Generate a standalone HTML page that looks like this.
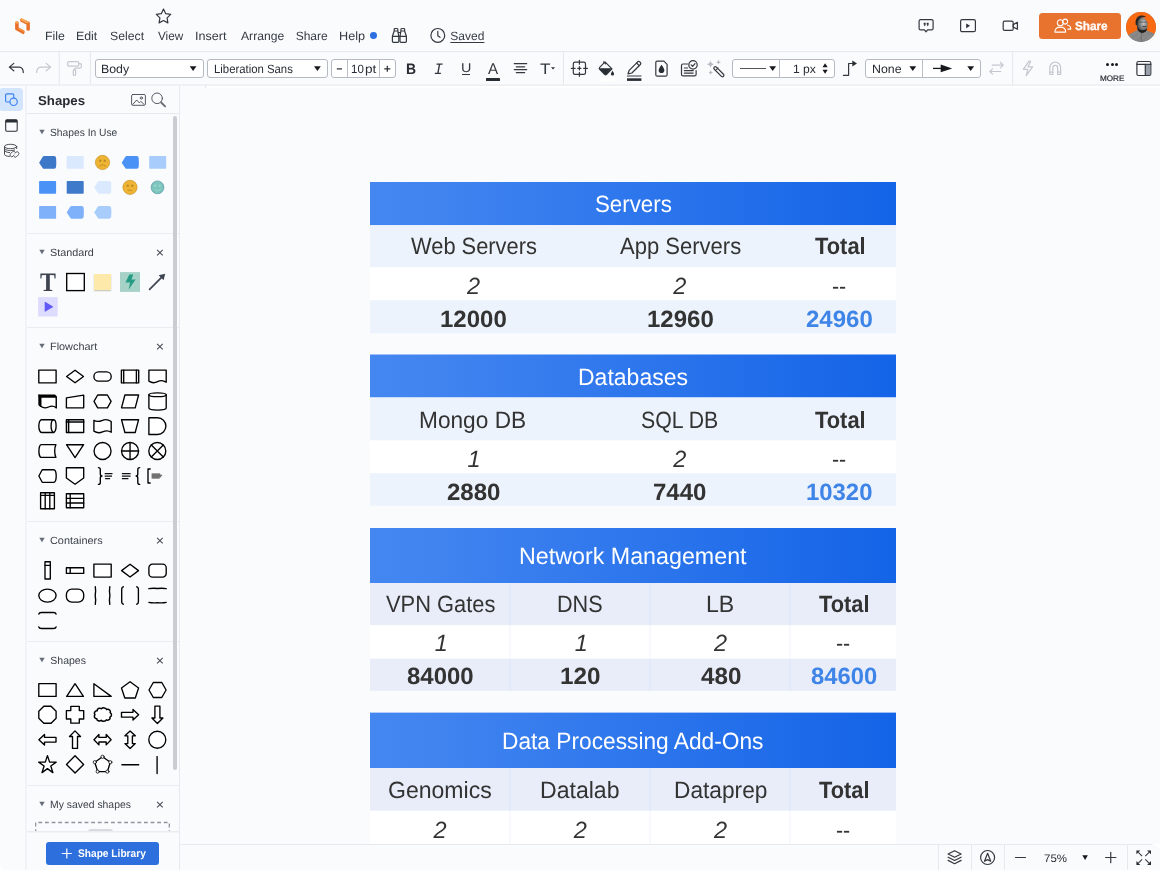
<!DOCTYPE html>
<html lang="en">
<head>
<meta charset="utf-8">
<title>Lucidchart</title>
<style>
*{box-sizing:border-box;margin:0;padding:0}
html,body{width:1160px;height:870px;overflow:hidden;background:#fafbfd;font-family:"Liberation Sans",sans-serif;color:#282c33;text-rendering:geometricPrecision}
.abs,.abs-all>*{position:absolute}
#app{position:relative;width:1160px;height:870px;overflow:hidden;background:#fafbfd;will-change:transform}
.hl{position:absolute;height:1px;background:#e6e8ec}
.vl{position:absolute;width:1px;background:#e6e8ec}
.t{position:absolute;white-space:nowrap;line-height:1}
.menu{font-size:12px;color:#3a414a;top:30px}
svg{position:absolute;overflow:visible}
.dd{position:absolute;background:#fff;border:1px solid #b5b9c2;border-radius:3px}
.sec{font-size:10.2px;color:#3a414a}
.ic{fill:none;stroke:#000;stroke-width:1.35;stroke-linejoin:round;stroke-linecap:round}
.tb{fill:none;stroke:#33383f;stroke-width:1.2;stroke-linejoin:round;stroke-linecap:round}
.tbd{fill:none;stroke:#c3c7cf;stroke-width:1.2;stroke-linejoin:round;stroke-linecap:round}
.th{position:absolute;left:370px;width:526px;background:linear-gradient(90deg,#4487f1 0%,#3a7fee 45%,#1465e8 100%);color:#fff;text-align:center;font-size:22px;white-space:nowrap}
.row{position:absolute;left:370px;width:526px}
.c{position:absolute;text-align:center;white-space:nowrap;color:#333;font-size:22px;line-height:1;transform:translateX(-50%)}
.b{font-weight:bold}
.i{font-style:italic}
.blue{color:#3f85e8}
</style>
</head>
<body>
<div id="app">
<!-- canvas -->
<svg style="left:0;top:0" width="1160" height="870" viewBox="0 0 1160 870"><defs><linearGradient id="hg" x1="0" y1="0" x2="1" y2="0"><stop offset="0" stop-color="#4487f1"/><stop offset="0.12" stop-color="#4184f0"/><stop offset="0.94" stop-color="#1766e8"/><stop offset="1" stop-color="#1464e8"/></linearGradient></defs>
<rect x="370" y="182" width="526" height="43.2" fill="url(#hg)"/>
<rect x="370" y="225.2" width="526" height="42.1" fill="#edf3fc"/>
<rect x="370" y="267.3" width="526" height="33" fill="#fff"/>
<rect x="370" y="300.3" width="526" height="33" fill="#edf3fc"/>
<rect x="370" y="354.5" width="526" height="43" fill="url(#hg)"/>
<rect x="370" y="397.5" width="526" height="43" fill="#edf3fc"/>
<rect x="370" y="440.5" width="526" height="32.8" fill="#fff"/>
<rect x="370" y="473.3" width="526" height="32.5" fill="#edf3fc"/>
<rect x="370" y="528" width="526" height="55" fill="url(#hg)"/>
<rect x="370" y="583" width="526" height="42.2" fill="#e8edf9"/>
<rect x="370" y="625.2" width="526" height="33.5" fill="#fff"/>
<rect x="370" y="658.7" width="526" height="32.1" fill="#e8edf9"/>
<rect x="509.5" y="583" width="1" height="42.2" fill="#dbe5f8"/>
<rect x="509.5" y="625.2" width="1" height="33.5" fill="#f1f4fb"/>
<rect x="509.5" y="658.7" width="1" height="32.1" fill="#dbe5f8"/>
<rect x="649.5" y="583" width="1" height="42.2" fill="#dbe5f8"/>
<rect x="649.5" y="625.2" width="1" height="33.5" fill="#f1f4fb"/>
<rect x="649.5" y="658.7" width="1" height="32.1" fill="#dbe5f8"/>
<rect x="789.5" y="583" width="1" height="42.2" fill="#dbe5f8"/>
<rect x="789.5" y="625.2" width="1" height="33.5" fill="#f1f4fb"/>
<rect x="789.5" y="658.7" width="1" height="32.1" fill="#dbe5f8"/>
<rect x="370" y="712.6" width="526" height="55.4" fill="url(#hg)"/>
<rect x="370" y="768" width="526" height="42.8" fill="#e8edf9"/>
<rect x="370" y="810.8" width="526" height="35.2" fill="#fff"/>
<rect x="509.5" y="768" width="1" height="42.8" fill="#dbe5f8"/>
<rect x="509.5" y="810.8" width="1" height="35.2" fill="#f1f4fb"/>
<rect x="649.5" y="768" width="1" height="42.8" fill="#dbe5f8"/>
<rect x="649.5" y="810.8" width="1" height="35.2" fill="#f1f4fb"/>
<rect x="789.5" y="768" width="1" height="42.8" fill="#dbe5f8"/>
<rect x="789.5" y="810.8" width="1" height="35.2" fill="#f1f4fb"/>
</svg>
<div class="t " style="left:594.80px;top:193px;font-size:23.5px;color:#fff;transform:scaleX(0.9484);transform-origin:0 0">Servers</div>
<div class="t " style="left:410.79px;top:235px;font-size:23.5px;color:#333;transform:scaleX(0.9299);transform-origin:0 0">Web Servers</div>
<div class="t " style="left:619.60px;top:235px;font-size:23.5px;color:#333;transform:scaleX(0.9374);transform-origin:0 0">App Servers</div>
<div class="t " style="left:815.18px;top:235px;font-size:23.5px;font-weight:bold;color:#333;transform:scaleX(0.9310);transform-origin:0 0">Total</div>
<div class="t " style="left:466.91px;top:275px;font-size:23.5px;font-style:italic;color:#333">2</div>
<div class="t " style="left:673.31px;top:275px;font-size:23.5px;font-style:italic;color:#333">2</div>
<div class="t " style="left:832.24px;top:275px;font-size:23.5px;color:#333;transform:scaleX(0.9098);transform-origin:0 0">--</div>
<div class="t " style="left:439.76px;top:308px;font-size:23.5px;font-weight:bold;color:#333;transform:scaleX(1.0210);transform-origin:0 0">12000</div>
<div class="t " style="left:646.66px;top:308px;font-size:23.5px;font-weight:bold;color:#333;transform:scaleX(1.0210);transform-origin:0 0">12960</div>
<div class="t " style="left:806.16px;top:308px;font-size:23.5px;font-weight:bold;color:#3f85e8;transform:scaleX(1.0210);transform-origin:0 0">24960</div>
<div class="t " style="left:577.76px;top:366px;font-size:23.5px;color:#fff;transform:scaleX(0.9788);transform-origin:0 0">Databases</div>
<div class="t " style="left:419.39px;top:409px;font-size:23.5px;color:#333;transform:scaleX(0.9650);transform-origin:0 0">Mongo DB</div>
<div class="t " style="left:640.94px;top:409px;font-size:23.5px;color:#333;transform:scaleX(0.9052);transform-origin:0 0">SQL DB</div>
<div class="t " style="left:815.18px;top:409px;font-size:23.5px;font-weight:bold;color:#333;transform:scaleX(0.9310);transform-origin:0 0">Total</div>
<div class="t " style="left:467.58px;top:448px;font-size:23.5px;font-style:italic;color:#333">1</div>
<div class="t " style="left:673.31px;top:448px;font-size:23.5px;font-style:italic;color:#333">2</div>
<div class="t " style="left:832.24px;top:448px;font-size:23.5px;color:#333;transform:scaleX(0.9098);transform-origin:0 0">--</div>
<div class="t " style="left:446.66px;top:481px;font-size:23.5px;font-weight:bold;color:#333;transform:scaleX(1.0233);transform-origin:0 0">2880</div>
<div class="t " style="left:653.04px;top:481px;font-size:23.5px;font-weight:bold;color:#333;transform:scaleX(1.0217);transform-origin:0 0">7440</div>
<div class="t " style="left:806.07px;top:481px;font-size:23.5px;font-weight:bold;color:#3f85e8;transform:scaleX(1.0162);transform-origin:0 0">10320</div>
<div class="t " style="left:519.04px;top:545px;font-size:23.5px;color:#fff;transform:scaleX(0.9898);transform-origin:0 0">Network Management</div>
<div class="t " style="left:386.09px;top:593px;font-size:23.5px;color:#333;transform:scaleX(0.9300);transform-origin:0 0">VPN Gates</div>
<div class="t " style="left:557.47px;top:593px;font-size:23.5px;color:#333;transform:scaleX(0.9197);transform-origin:0 0">DNS</div>
<div class="t " style="left:706.05px;top:593px;font-size:23.5px;color:#333;transform:scaleX(0.9838);transform-origin:0 0">LB</div>
<div class="t " style="left:819.18px;top:593px;font-size:23.5px;font-weight:bold;color:#333;transform:scaleX(0.9291);transform-origin:0 0">Total</div>
<div class="t " style="left:434.78px;top:632px;font-size:23.5px;font-style:italic;color:#333">1</div>
<div class="t " style="left:574.78px;top:632px;font-size:23.5px;font-style:italic;color:#333">1</div>
<div class="t " style="left:714.01px;top:632px;font-size:23.5px;font-style:italic;color:#333">2</div>
<div class="t " style="left:836.04px;top:632px;font-size:23.5px;color:#333;transform:scaleX(0.9098);transform-origin:0 0">--</div>
<div class="t " style="left:406.78px;top:665px;font-size:23.5px;font-weight:bold;color:#333;transform:scaleX(1.0206);transform-origin:0 0">84000</div>
<div class="t " style="left:559.84px;top:665px;font-size:23.5px;font-weight:bold;color:#333;transform:scaleX(1.0332);transform-origin:0 0">120</div>
<div class="t " style="left:700.64px;top:665px;font-size:23.5px;font-weight:bold;color:#333;transform:scaleX(1.0308);transform-origin:0 0">480</div>
<div class="t " style="left:810.79px;top:665px;font-size:23.5px;font-weight:bold;color:#3f85e8;transform:scaleX(1.0128);transform-origin:0 0">84600</div>
<div class="t " style="left:502.28px;top:730px;font-size:23.5px;color:#fff;transform:scaleX(0.9669);transform-origin:0 0">Data Processing Add-Ons</div>
<div class="t " style="left:388.25px;top:779px;font-size:23.5px;color:#333;transform:scaleX(0.9802);transform-origin:0 0">Genomics</div>
<div class="t " style="left:540.05px;top:779px;font-size:23.5px;color:#333;transform:scaleX(0.9816);transform-origin:0 0">Datalab</div>
<div class="t " style="left:673.58px;top:779px;font-size:23.5px;color:#333;transform:scaleX(0.9661);transform-origin:0 0">Dataprep</div>
<div class="t " style="left:819.18px;top:779px;font-size:23.5px;font-weight:bold;color:#333;transform:scaleX(0.9291);transform-origin:0 0">Total</div>
<div class="t " style="left:433.41px;top:819px;font-size:23.5px;font-style:italic;color:#333">2</div>
<div class="t " style="left:573.71px;top:819px;font-size:23.5px;font-style:italic;color:#333">2</div>
<div class="t " style="left:714.01px;top:819px;font-size:23.5px;font-style:italic;color:#333">2</div>
<div class="t " style="left:836.04px;top:819px;font-size:23.5px;color:#333;transform:scaleX(0.9098);transform-origin:0 0">--</div>
<!-- bottom bar -->
<div class="abs" style="left:180px;top:844px;width:980px;height:26px;background:#fafbfd;"></div>
<div class="abs" style="left:180px;top:844px;width:973px;height:1px;background:#e6e9ed;"></div>
<div class="abs" style="left:938px;top:845px;width:1px;height:25px;background:#e7e9ed;"></div>
<div class="abs" style="left:971px;top:845px;width:1px;height:25px;background:#e7e9ed;"></div>
<div class="abs" style="left:1004px;top:845px;width:1px;height:25px;background:#e7e9ed;"></div>
<div class="abs" style="left:1127px;top:845px;width:1px;height:25px;background:#e7e9ed;"></div>
<div class="t " style="left:1044.33px;top:854px;font-size:11px;color:#282c33;transform:scaleX(1.0444);transform-origin:0 0">75%</div>
<!-- top bar -->
<div class="abs" style="left:0px;top:0px;width:1160px;height:86px;background:#fafbfd;"></div>
<svg style="left:0px;top:50px;" width="1160" height="4" viewBox="0 0 1160 4"><rect x="0" y="1.100" width="1160" height="1.050" fill="#e5e7eb"/></svg>
<svg style="left:0px;top:83px;" width="1160" height="4" viewBox="0 0 1160 4"><rect x="0" y="1.500" width="1160" height="1.050" fill="#e5e7eb"/></svg>
<div class="abs" style="left:206px;top:86px;width:954px;height:2px;background:#fff;"></div>
<div class="abs" style="left:205px;top:85px;width:1px;height:3px;background:#e4e6ea;"></div>
<div class="t " style="left:44.51px;top:30px;font-size:12px;color:#343a43;transform:scaleX(1.0269);transform-origin:0 0">File</div>
<div class="t " style="left:76.21px;top:30px;font-size:12px;color:#343a43;transform:scaleX(1.0296);transform-origin:0 0">Edit</div>
<div class="t " style="left:110.15px;top:30px;font-size:12px;color:#343a43;transform:scaleX(1.0214);transform-origin:0 0">Select</div>
<div class="t " style="left:157.74px;top:30px;font-size:12px;color:#343a43;transform:scaleX(0.9790);transform-origin:0 0">View</div>
<div class="t " style="left:195.37px;top:30px;font-size:12px;color:#343a43;transform:scaleX(1.0464);transform-origin:0 0">Insert</div>
<div class="t " style="left:240.50px;top:30px;font-size:12px;color:#343a43;transform:scaleX(1.0114);transform-origin:0 0">Arrange</div>
<div class="t " style="left:295.66px;top:30px;font-size:12px;color:#343a43">Share</div>
<div class="t " style="left:339.49px;top:30px;font-size:12px;color:#343a43;transform:scaleX(1.0551);transform-origin:0 0">Help</div>
<div class="abs" style="left:370px;top:32.3px;width:6.8px;height:6.8px;background:#2d6fe0;border-radius:50%"></div>
<div class="t " style="left:450.36px;top:30px;font-size:12px;color:#343a43;text-decoration:underline;text-underline-offset:1.5px">Saved</div>
<div class="abs" style="left:1039px;top:13px;width:82.2px;height:25.8px;background:#e8732f;border-radius:3.5px"></div>
<div class="t " style="left:1075.15px;top:20px;font-size:12px;font-weight:bold;color:#fff;transform:scaleX(0.9791);transform-origin:0 0;-webkit-text-stroke:0.25px #fff">Share</div>
<svg style="left:1126px;top:12px;" width="30" height="30" viewBox="0 0 30 30"><defs><clipPath id="avc"><circle cx="15" cy="15" r="15"/></clipPath>
<radialGradient id="avf" cx="0.62" cy="0.38" r="0.6"><stop offset="0" stop-color="#c9c9c9"/><stop offset="0.45" stop-color="#8d8d8d"/><stop offset="1" stop-color="#4a4a4a"/></radialGradient></defs>
<g clip-path="url(#avc)"><rect width="30" height="30" fill="#858585"/><rect width="30" height="24.500" fill="#f96a12"/>
<path d="M1 23.500L10.800 18.300L20.500 18.300L29 22L29 31H1Z" fill="#858585"/>
<path d="M4 24L11 20M8 27L15 23M14 29L20 24M20 28L26 23M12 21L18 26M17 20L24 26" stroke="#9c9c9c" stroke-width="0.7" fill="none" opacity=".7"/>
<path d="M15.300 19V30" stroke="#6a6a6a" stroke-width="0.8"/>
<path d="M11 13Q10.500 19.500 16 20.600Q20.500 20 21.500 15L21.600 11Q20 5.500 15.500 5.200Q10.500 6 11 13Z" fill="url(#avf)"/>
<path d="M9.600 12.500Q8.600 5.500 14.500 3.600Q18.600 2.800 20.200 5.200Q14.500 4.500 12.400 8.500Q11.200 11 11.300 14Z" fill="#262626"/>
<path d="M11.200 14.500Q11.200 20 16.200 21Q20.200 20.500 21.300 16.500Q19 18.500 16.200 18.200Q12.800 18 11.200 14.500Z" fill="#1d1d1d"/>
<path d="M13.500 10.200H21.200" stroke="#3a3a3a" stroke-width="0.6" fill="none"/>
<path d="M16.600 14.400Q18.500 15 20.200 14.200" stroke="#2a2a2a" stroke-width="0.8" fill="none"/>
</g></svg>
<!-- toolbar -->
<svg style="left:57px;top:52px;" width="4" height="33" viewBox="0 0 4 33"><rect x="1.7" y="0.300" width="1.050" height="32.200" fill="#e5e7eb"/></svg>
<svg style="left:88px;top:52px;" width="4" height="33" viewBox="0 0 4 33"><rect x="1.9" y="0.300" width="1.050" height="32.200" fill="#e5e7eb"/></svg>
<svg style="left:561px;top:52px;" width="4" height="33" viewBox="0 0 4 33"><rect x="1.9" y="0.300" width="1.050" height="32.200" fill="#e5e7eb"/></svg>
<svg style="left:1011px;top:52px;" width="4" height="33" viewBox="0 0 4 33"><rect x="1.1" y="0.300" width="1.050" height="32.200" fill="#e5e7eb"/></svg>
<div class="dd" style="left:94.5px;top:59px;width:109px;height:18.6px"></div>
<div class="t " style="left:100.71px;top:63px;font-size:12px;color:#282c33;transform:scaleX(1.0265);transform-origin:0 0">Body</div>
<div class="dd" style="left:207.2px;top:59px;width:120.5px;height:18.6px"></div>
<div class="t " style="left:213.79px;top:63px;font-size:12px;color:#282c33;transform:scaleX(0.9449);transform-origin:0 0">Liberation Sans</div>
<div class="dd" style="left:331px;top:59px;width:65px;height:18.6px"></div>
<div class="abs" style="left:347px;top:60px;width:1px;height:16.6px;background:#b9bec8;"></div>
<div class="abs" style="left:379px;top:60px;width:1px;height:16.6px;background:#b9bec8;"></div>
<div class="t " style="left:350.84px;top:63px;font-size:12px;color:#282c33;transform:scaleX(0.9583);transform-origin:0 0">10</div>
<div class="t " style="left:364.72px;top:63px;font-size:12px;color:#282c33;transform:scaleX(1.1294);transform-origin:0 0">pt</div>
<div class="dd" style="left:731.5px;top:59px;width:103px;height:18.6px"></div>
<div class="abs" style="left:779px;top:60px;width:1px;height:16.6px;background:#b9bec8;"></div>
<div class="t " style="left:792.69px;top:63px;font-size:12px;color:#282c33;transform:scaleX(1.0111);transform-origin:0 0">1 px</div>
<div class="dd" style="left:865.2px;top:59px;width:115.5px;height:18.6px"></div>
<div class="abs" style="left:922px;top:60px;width:1px;height:16.6px;background:#b9bec8;"></div>
<div class="t " style="left:872.01px;top:63px;font-size:12px;color:#282c33;transform:scaleX(1.0302);transform-origin:0 0">None</div>
<div class="t " style="left:1099.85px;top:75px;font-size:8px;color:#282c33;transform:scaleX(1.0156);transform-origin:0 0;-webkit-text-stroke:0.2px #282c33">MORE</div>
<!-- left panel -->
<div class="abs" style="left:0px;top:86px;width:180px;height:784px;background:#fafbfd;"></div>
<svg style="left:24px;top:86px;" width="4" height="784" viewBox="0 0 4 784"><rect x="1.400" y="0" width="1.050" height="784" fill="#eaecef"/></svg>
<div class="abs" style="left:179px;top:86px;width:1px;height:784px;background:#e7e9ed;"></div>
<div class="abs" style="left:-1px;top:88px;width:24px;height:23px;background:#d3e4fd;border-radius:4px"></div>
<div class="t " style="left:37.50px;top:94px;font-size:13px;font-weight:bold;color:#282c33;transform:scaleX(1.0175);transform-origin:0 0">Shapes</div>
<div class="abs" style="left:27px;top:113px;width:152px;height:1px;background:#e7e9ed;"></div>
<svg style="left:39px;top:129px;" width="5.4" height="4.6" viewBox="0 0 5.4 4.6"><g transform="translate(0.3 0.7)"><path d="M0 0H5.4L2.7 4.6Z" fill="#666d79"/></g></svg>
<div class="t " style="left:50.34px;top:128px;font-size:10.5px;color:#3a414a;transform:scaleX(0.9774);transform-origin:0 0">Shapes In Use</div>
<svg style="left:39px;top:249px;" width="5.4" height="4.6" viewBox="0 0 5.4 4.6"><g transform="translate(0.3 0.7)"><path d="M0 0H5.4L2.7 4.6Z" fill="#666d79"/></g></svg>
<div class="t " style="left:50.31px;top:248px;font-size:10.5px;color:#3a414a;transform:scaleX(1.0295);transform-origin:0 0">Standard</div>
<svg style="left:157px;top:249px;" width="5.6" height="5.6" viewBox="0 0 5.6 5.6"><g transform="translate(0.1 0.9)"><path d="M0 0L5.6 5.6M5.6 0L0 5.6" stroke="#454b54" stroke-width="1.050" fill="none"/></g></svg>
<svg style="left:39px;top:343px;" width="5.4" height="4.6" viewBox="0 0 5.4 4.6"><g transform="translate(0.3 0.7)"><path d="M0 0H5.4L2.7 4.6Z" fill="#666d79"/></g></svg>
<div class="t " style="left:49.93px;top:342px;font-size:10.5px;color:#3a414a;transform:scaleX(1.0365);transform-origin:0 0">Flowchart</div>
<svg style="left:157px;top:343px;" width="5.6" height="5.6" viewBox="0 0 5.6 5.6"><g transform="translate(0.1 0.9)"><path d="M0 0L5.6 5.6M5.6 0L0 5.6" stroke="#454b54" stroke-width="1.050" fill="none"/></g></svg>
<svg style="left:39px;top:537px;" width="5.4" height="4.6" viewBox="0 0 5.4 4.6"><g transform="translate(0.3 0.7)"><path d="M0 0H5.4L2.7 4.6Z" fill="#666d79"/></g></svg>
<div class="t " style="left:50.26px;top:536px;font-size:10.5px;color:#3a414a;transform:scaleX(1.0366);transform-origin:0 0">Containers</div>
<svg style="left:157px;top:537px;" width="5.6" height="5.6" viewBox="0 0 5.6 5.6"><g transform="translate(0.1 0.9)"><path d="M0 0L5.6 5.6M5.6 0L0 5.6" stroke="#454b54" stroke-width="1.050" fill="none"/></g></svg>
<svg style="left:39px;top:657px;" width="5.4" height="4.6" viewBox="0 0 5.4 4.6"><g transform="translate(0.3 0.7)"><path d="M0 0H5.4L2.7 4.6Z" fill="#666d79"/></g></svg>
<div class="t " style="left:50.33px;top:656px;font-size:10.5px;color:#3a414a">Shapes</div>
<svg style="left:157px;top:657px;" width="5.6" height="5.6" viewBox="0 0 5.6 5.6"><g transform="translate(0.1 0.9)"><path d="M0 0L5.6 5.6M5.6 0L0 5.6" stroke="#454b54" stroke-width="1.050" fill="none"/></g></svg>
<svg style="left:39px;top:801px;" width="5.4" height="4.6" viewBox="0 0 5.4 4.6"><g transform="translate(0.3 0.7)"><path d="M0 0H5.4L2.7 4.6Z" fill="#666d79"/></g></svg>
<div class="t " style="left:49.97px;top:800px;font-size:10.5px;color:#3a414a;transform:scaleX(0.9903);transform-origin:0 0">My saved shapes</div>
<svg style="left:157px;top:801px;" width="5.6" height="5.6" viewBox="0 0 5.6 5.6"><g transform="translate(0.1 0.9)"><path d="M0 0L5.6 5.6M5.6 0L0 5.6" stroke="#454b54" stroke-width="1.050" fill="none"/></g></svg>
<div class="abs" style="left:27px;top:233px;width:152px;height:1px;background:#eaecef;"></div>
<div class="abs" style="left:27px;top:327px;width:152px;height:1px;background:#eaecef;"></div>
<div class="abs" style="left:27px;top:521px;width:152px;height:1px;background:#eaecef;"></div>
<div class="abs" style="left:27px;top:641px;width:152px;height:1px;background:#eaecef;"></div>
<div class="abs" style="left:27px;top:785px;width:152px;height:1px;background:#eaecef;"></div>
<div class="abs" style="left:173px;top:116px;width:4.2px;height:654px;background:#c9ccd3;border-radius:2.2px"></div>
<svg style="left:35px;top:821px;" width="136" height="12" viewBox="0 0 136 12"><path d="M0.700 12V1.500H134.300V12" fill="none" stroke="#8f949d" stroke-width="1.300" stroke-dasharray="3.800 2.800"/></svg>
<div class="abs" style="left:88px;top:828.8px;width:25px;height:4px;background:#d7dae0;border-radius:3px 3px 0 0"></div>
<div class="abs" style="left:27px;top:832px;width:152px;height:38px;background:#fafbfd;"></div>
<div class="abs" style="left:27px;top:831px;width:152px;height:1px;background:#eaecef;"></div>
<div class="abs" style="left:27px;top:832px;width:152px;height:1px;background:#f3f4f6;"></div>
<div class="abs" style="left:46px;top:842px;width:113px;height:23px;background:#2c6fdd;border-radius:3px"></div>
<div class="t " style="left:78.49px;top:849px;font-size:11px;font-weight:bold;color:#fff;transform:scaleX(0.9248);transform-origin:0 0">Shape Library</div>
<svg style="left:61px;top:848px;" width="10" height="10" viewBox="0 0 10 10"><g transform="translate(0.8 0.5)"><path d="M5 0V10M0 5H10" stroke="#fff" stroke-width="1.2" fill="none"/></g></svg>
<!-- rail icons -->
<svg style="left:0px;top:86px;" width="26" height="80" viewBox="0 0 26 80">
<rect x="5.6" y="7.8" width="8.2" height="8.2" rx="1.2" fill="none" stroke="#3b82f0" stroke-width="1.15"/>
<circle cx="13.6" cy="15.8" r="3.7" fill="#d3e4fd" stroke="#3b82f0" stroke-width="1.15"/>
<rect x="5.7" y="33.7" width="11.5" height="11.6" rx="1.2" fill="none" stroke="#282c33" stroke-width="1.050"/>
<path d="M5.7 34.9a1.2 1.2 0 0 1 1.2-1.2h9.1a1.2 1.2 0 0 1 1.2 1.2v1.6H5.7z" fill="#282c33"/>
<g fill="none" stroke="#40454d" stroke-width="0.95" stroke-linecap="round">
<ellipse cx="10.600" cy="60.500" rx="6.100" ry="2.200"/>
<path d="M4.500 60.500V68.300C4.500 69.400 6.500 70.300 9.300 70.500M16.700 60.500V62.600M4.500 64.400C4.500 65.500 6.600 66.400 9.600 66.600M4.500 62.400C4.500 63.600 7.200 64.600 10.600 64.600C12.200 64.600 13.600 64.400 14.700 64"/>
<path d="M14 69.200L13 70.200A1.750 1.750 0 0 1 10.500 67.700L12.400 65.800A1.750 1.750 0 0 1 14.900 65.800M14.900 67.300L15.900 66.300A1.750 1.750 0 0 1 18.400 68.800L16.500 70.700A1.750 1.750 0 0 1 14 70.700" stroke-width="0.9"/>
</g>
</svg>
<svg style="left:130px;top:92px;" width="40" height="18" viewBox="0 0 40 18">
<g fill="none" stroke="#4a4f58" stroke-width="0.95" stroke-linejoin="round" stroke-linecap="round">
<rect x="1.6" y="2.5" width="13.8" height="10.8" rx="1.3"/>
<circle cx="11.3" cy="6" r="1.1"/>
<path d="M3 12.2l3.700-4.200 2.600 2.900 1.500-1.500 3 2.800"/>
<circle cx="27.100" cy="6.300" r="5.300"/>
<path d="M31.200 10.500l3.900 3.900" stroke-width="1.900" stroke="#6a6f78"/>
</g>
</svg>
<!-- shapes in use -->
<svg style="left:38px;top:150px" width="20" height="25" viewBox="0 0 20 25"><g class="" transform="translate(0.2 12.45)"><path d="M0.9 0.300L4.400 -5.500Q5 -6.400 6 -6.400H15.800Q17.900 -6.400 17.900 -4.300Q18.300 0 17.900 4.300Q17.900 6.400 15.800 6.400H6Q5 6.400 4.400 5.500Z" fill="#3d78c8" stroke="none"/></g></svg>
<svg style="left:65px;top:150px" width="20" height="25" viewBox="0 0 20 25"><g class="" transform="translate(0.8 12.45)"><rect x="0.9" y="-6.400" width="17" height="12.800" rx="0.8" fill="#dbe9fe" stroke="none"/></g></svg>
<svg style="left:93px;top:150px" width="20" height="25" viewBox="0 0 20 25"><g class="" transform="translate(0.3 12.45)"><circle cx="9.200" cy="0" r="7.1" fill="#eeb432" stroke="#c8922a" stroke-width="0.7"/><circle cx="6.900" cy="-1.700" r="1.200" fill="#b98a2a" stroke="none"/><circle cx="11.500" cy="-1.700" r="1.200" fill="#b98a2a" stroke="none"/><path d="M5.900 3.900Q9.200 0.600 12.500 3.900" fill="none" stroke="#b98a2a" stroke-width="0.9" stroke-linecap="round"/></g></svg>
<svg style="left:120px;top:150px" width="20" height="25" viewBox="0 0 20 25"><g class="" transform="translate(0.8 12.45)"><path d="M0.9 0.300L4.400 -5.500Q5 -6.400 6 -6.400H15.800Q17.900 -6.400 17.900 -4.300Q18.300 0 17.900 4.300Q17.900 6.400 15.800 6.400H6Q5 6.400 4.400 5.500Z" fill="#4b92f7" stroke="none"/></g></svg>
<svg style="left:148px;top:150px" width="20" height="25" viewBox="0 0 20 25"><g class="" transform="translate(0.3 12.45)"><rect x="0.9" y="-6.400" width="17" height="12.800" rx="0.8" fill="#a8cdfd" stroke="none"/></g></svg>
<svg style="left:38px;top:175px" width="20" height="25" viewBox="0 0 20 25"><g class="" transform="translate(0.2 12.35)"><rect x="0.9" y="-6.400" width="17" height="12.800" rx="0.8" fill="#4b92f7" stroke="none"/></g></svg>
<svg style="left:65px;top:175px" width="20" height="25" viewBox="0 0 20 25"><g class="" transform="translate(0.8 12.35)"><rect x="0.9" y="-6.400" width="17" height="12.800" rx="0.8" fill="#3f79c9" stroke="none"/></g></svg>
<svg style="left:93px;top:175px" width="20" height="25" viewBox="0 0 20 25"><g class="" transform="translate(0.3 12.35)"><path d="M0.9 0.300L4.400 -5.500Q5 -6.400 6 -6.400H15.800Q17.900 -6.400 17.900 -4.300Q18.300 0 17.900 4.300Q17.900 6.400 15.800 6.400H6Q5 6.400 4.400 5.500Z" fill="#dbe9fe" stroke="none"/></g></svg>
<svg style="left:120px;top:175px" width="20" height="25" viewBox="0 0 20 25"><g class="" transform="translate(0.8 12.35)"><circle cx="9.200" cy="0" r="7.1" fill="#eeb432" stroke="#c8922a" stroke-width="0.7"/><circle cx="6.900" cy="-1.700" r="1.200" fill="#b98a2a" stroke="none"/><circle cx="11.500" cy="-1.700" r="1.200" fill="#b98a2a" stroke="none"/><path d="M7.400 2.900H11" fill="none" stroke="#b98a2a" stroke-width="0.9" stroke-linecap="round"/></g></svg>
<svg style="left:148px;top:175px" width="20" height="25" viewBox="0 0 20 25"><g class="" transform="translate(0.3 12.35)"><circle cx="9.200" cy="0" r="6.4" fill="#7cc5bd" stroke="#5f97a8" stroke-width="0.7"/><circle cx="6.900" cy="-1.700" r="1.200" fill="#9ad6d0" stroke="none"/><circle cx="11.500" cy="-1.700" r="1.200" fill="#9ad6d0" stroke="none"/><path d="M6.200 2Q9.200 4.800 12.200 2" fill="none" stroke="#9ad6d0" stroke-width="0.9" stroke-linecap="round"/></g></svg>
<svg style="left:38px;top:200px" width="20" height="25" viewBox="0 0 20 25"><g class="" transform="translate(0.2 12.3)"><rect x="0.9" y="-6.400" width="17" height="12.800" rx="0.8" fill="#7eb1f9" stroke="none"/></g></svg>
<svg style="left:65px;top:200px" width="20" height="25" viewBox="0 0 20 25"><g class="" transform="translate(0.8 12.3)"><path d="M0.9 0.300L4.400 -5.500Q5 -6.400 6 -6.400H15.800Q17.900 -6.400 17.900 -4.300Q18.300 0 17.900 4.300Q17.900 6.400 15.800 6.400H6Q5 6.400 4.400 5.500Z" fill="#7eb1f9" stroke="none"/></g></svg>
<svg style="left:93px;top:200px" width="20" height="25" viewBox="0 0 20 25"><g class="" transform="translate(0.3 12.3)"><path d="M0.9 0.300L4.400 -5.500Q5 -6.400 6 -6.400H15.800Q17.900 -6.400 17.900 -4.300Q18.300 0 17.900 4.300Q17.900 6.400 15.800 6.400H6Q5 6.400 4.400 5.500Z" fill="#a8cdfd" stroke="none"/></g></svg>
<!-- standard -->
<div class="t" style="left:39.64px;top:269px;font-size:26.6px;line-height:1;font-family:'Liberation Serif',serif;color:#3d4450;transform:scaleX(0.8999);transform-origin:0 0;font-weight:bold">T</div>
<svg style="left:65px;top:272px;" width="21" height="20" viewBox="0 0 21 20"><rect x="1.700" y="1.500" width="17.600" height="17.100" fill="#fff" stroke="#000" stroke-width="1.350"/></svg>
<div class="abs" style="left:94px;top:273.5px;width:17px;height:16.8px;background:#fde9a9;box-shadow:0 1px 1.2px rgba(90,80,40,.35)"></div>
<svg style="left:120px;top:272px;" width="20" height="20" viewBox="0 0 20 20"><rect x="0" y="0.100" width="20" height="19.800" fill="#a5d1c6"/></svg>
<svg style="left:120px;top:272px;" width="20" height="19.8" viewBox="0 0 20 19.8"><g transform="translate(0 0.1)"><path d="M9.300 2.400H13.200L11.500 7.300H15.600L8.700 17.300L10.100 10.400H5.500Z" fill="#259b84"/></g></svg>
<svg style="left:148px;top:272px;" width="19" height="20" viewBox="0 0 19 20"><path d="M1.600 17.300L14.300 4.600" stroke="#3d4450" stroke-width="1.700" fill="none" stroke-linecap="round"/><path d="M17.200 1.700L15.600 8.300L10.600 3.300Z" fill="#3d4450"/></svg>
<svg style="left:38px;top:297px;" width="20" height="20" viewBox="0 0 20 20"><rect x="0.100" y="0.100" width="19.600" height="19.400" fill="#dddcff"/></svg>
<svg style="left:38px;top:297px;" width="19.6" height="19.4" viewBox="0 0 19.6 19.4"><g transform="translate(0.1 0.1)"><path d="M6.600 5.300Q6.600 4.500 7.400 4.900L14.500 9.200Q15.200 9.700 14.500 10.200L7.400 14.500Q6.600 14.900 6.600 14.100Z" fill="#6359f5"/></g></svg>
<!-- flowchart -->
<svg style="left:38px;top:364px" width="20" height="25" viewBox="0 0 20 25"><g class="ic" transform="translate(0.2 12.5)"><rect x="0.600" y="-6.400" width="17.300" height="12.800" fill="#fff"/></g></svg>
<svg style="left:65px;top:364px" width="20" height="25" viewBox="0 0 20 25"><g class="ic" transform="translate(0.8 12.5)"><path d="M0.800 0L9.250 -6.300L17.700 0L9.250 6.300Z" fill="#fff"/></g></svg>
<svg style="left:93px;top:364px" width="20" height="25" viewBox="0 0 20 25"><g class="ic" transform="translate(0.3 12.5)"><rect x="0.600" y="-4.600" width="17.300" height="9.200" rx="4.600" fill="#fff"/></g></svg>
<svg style="left:120px;top:364px" width="20" height="25" viewBox="0 0 20 25"><g class="ic" transform="translate(0.8 12.5)"><rect x="0.600" y="-6.400" width="17.300" height="12.800" fill="#fff"/><path d="M2.900 -6.400V6.400M15.600 -6.400V6.400"/></g></svg>
<svg style="left:148px;top:364px" width="20" height="25" viewBox="0 0 20 25"><g class="ic" transform="translate(0.3 12.5)"><path d="M0.600 -6.400H17.900V5.800C14.500 3.200 12.300 3.600 9.200 5.200S3.400 6.600 0.600 4.600Z" fill="#fff"/></g></svg>
<svg style="left:38px;top:389px" width="20" height="25" viewBox="0 0 20 25"><g class="ic" transform="translate(0.2 12.4)"><path d="M0.800 -6.300H16.300L18 -4.600V6.300L18 -4.600H1.200Z" fill="#000" stroke-width="1.400"/><path d="M2.400 -4.300H18V6.300C15 4.000 13 4.300 10.400 5.600S5 6.800 2.400 4.900Z" fill="#fff"/><path d="M0.800 -6.300V3.400L2.400 4.900V-4.300Z" fill="#000"/></g></svg>
<svg style="left:65px;top:389px" width="20" height="25" viewBox="0 0 20 25"><g class="ic" transform="translate(0.8 12.4)"><path d="M0.600 -3.600L17.900 -6.300V6.400H0.600Z" fill="#fff"/></g></svg>
<svg style="left:93px;top:389px" width="20" height="25" viewBox="0 0 20 25"><g class="ic" transform="translate(0.3 12.4)"><path d="M0.700 0L4.400 -6.400H14.100L17.800 0L14.100 6.400H4.400Z" fill="#fff"/></g></svg>
<svg style="left:120px;top:389px" width="20" height="25" viewBox="0 0 20 25"><g class="ic" transform="translate(0.8 12.4)"><path d="M4.100 -6.400H17.800L14.400 6.400H0.700Z" fill="#fff"/></g></svg>
<svg style="left:148px;top:389px" width="20" height="25" viewBox="0 0 20 25"><g class="ic" transform="translate(0.3 12.4)"><path d="M0.600 -6.700V6.700C0.600 7.900 4.500 8.700 9.250 8.700S17.900 7.900 17.900 6.700V-6.700" fill="#fff"/><ellipse cx="9.250" cy="-6.700" rx="8.650" ry="1.900" fill="#fff"/></g></svg>
<svg style="left:38px;top:414px" width="20" height="25" viewBox="0 0 20 25"><g class="ic" transform="translate(0.2 12.1)"><path d="M3.400 -6.400H15.400C16.800 -6.400 17.900 -3.500 17.900 0S16.800 6.400 15.400 6.400H3.400C1.900 6.400 0.600 3.500 0.600 0S1.900 -6.400 3.400 -6.400Z" fill="#fff"/><path d="M15.400 -6.400C14 -6.400 12.900 -3.500 12.900 0S14 6.400 15.400 6.400"/></g></svg>
<svg style="left:65px;top:414px" width="20" height="25" viewBox="0 0 20 25"><g class="ic" transform="translate(0.8 12.1)"><rect x="0.600" y="-6.400" width="17.300" height="12.800" fill="#fff"/><path d="M0.600 -4.200H17.900M2.800 -6.400V6.400" stroke-width="1.500"/></g></svg>
<svg style="left:93px;top:414px" width="20" height="25" viewBox="0 0 20 25"><g class="ic" transform="translate(0.3 12.1)"><path d="M0.600 -5.800C3.600 -3.800 6 -4.400 9.200 -5.800S14.900 -6.600 17.900 -4.600V6.200C14.900 4.000 12.400 4.400 9.200 5.800S3.600 7 0.600 5Z" fill="#fff"/></g></svg>
<svg style="left:120px;top:414px" width="20" height="25" viewBox="0 0 20 25"><g class="ic" transform="translate(0.8 12.1)"><path d="M0.700 -6.400H17.800L14.400 6.400H4.100Z" fill="#fff"/></g></svg>
<svg style="left:148px;top:414px" width="20" height="25" viewBox="0 0 20 25"><g class="ic" transform="translate(0.3 12.1)"><path d="M0.600 -8.400H9.200A8.400 8.400 0 0 1 9.200 8.400H0.600Z" fill="#fff"/></g></svg>
<svg style="left:38px;top:439px" width="20" height="25" viewBox="0 0 20 25"><g class="ic" transform="translate(0.2 12)"><path d="M3 -6.400H17.700C16.700 -4.400 16.500 -2.200 16.500 0S16.700 4.400 17.700 6.400H3C1.700 6.400 0.700 3.500 0.700 0S1.700 -6.400 3 -6.400Z" fill="#fff"/></g></svg>
<svg style="left:65px;top:439px" width="20" height="25" viewBox="0 0 20 25"><g class="ic" transform="translate(0.8 12)"><path d="M0.700 -6.300H17.800L9.250 6.600Z" fill="#fff"/></g></svg>
<svg style="left:93px;top:439px" width="20" height="25" viewBox="0 0 20 25"><g class="ic" transform="translate(0.3 12)"><circle cx="9.250" cy="0" r="8.500" fill="#fff"/></g></svg>
<svg style="left:120px;top:439px" width="20" height="25" viewBox="0 0 20 25"><g class="ic" transform="translate(0.8 12)"><circle cx="9.250" cy="0" r="8.500" fill="#fff"/><path d="M0.750 0H17.750M9.250 -8.500V8.500"/></g></svg>
<svg style="left:148px;top:439px" width="20" height="25" viewBox="0 0 20 25"><g class="ic" transform="translate(0.3 12)"><circle cx="9.000" cy="0" r="8.500" fill="#fff"/><path d="M3 -6L15 6M15 -6L3 6"/></g></svg>
<svg style="left:38px;top:464px" width="20" height="25" viewBox="0 0 20 25"><g class="ic" transform="translate(0.2 12)"><path d="M0.700 0L4 -6.300H15.400C16.800 -6.300 18 -3.500 18 0S16.800 6.300 15.400 6.300H4Z" fill="#fff"/></g></svg>
<svg style="left:65px;top:464px" width="20" height="25" viewBox="0 0 20 25"><g class="ic" transform="translate(0.8 12)"><path d="M0.600 -8.300H17.900V2L9.250 8.300L0.600 2Z" fill="#fff"/></g></svg>
<svg style="left:93px;top:464px" width="20" height="25" viewBox="0 0 20 25"><g class="ic" transform="translate(0.3 12)"><path d="M5.100 -8.400C6.800 -8.400 7 -7.600 7 -6.400V-2.200C7 -0.800 7.500 0 8.700 0C7.500 0 7 0.800 7 2.200V6.400C7 7.600 6.800 8.400 5.100 8.400"/><path d="M11.400 -2.500H19.200M11.400 0H18.700M11.800 2.500H16.800" stroke-width="1.250" stroke="#111" stroke-linecap="butt"/></g></svg>
<svg style="left:120px;top:464px" width="20" height="25" viewBox="0 0 20 25"><g class="ic" transform="translate(0.8 12)"><path d="M18.900 -8.400C17.200 -8.400 17 -7.600 17 -6.400V-2.200C17 -0.800 16.500 0 15.300 0C16.500 0 17 0.800 17 2.200V6.400C17 7.600 17.200 8.400 18.900 8.400"/><path d="M1.100 -2.500H9.800M1.100 0H9.800M1.100 2.500H7.600" stroke-width="1.250" stroke="#111" stroke-linecap="butt"/></g></svg>
<svg style="left:148px;top:464px" width="20" height="25" viewBox="0 0 20 25"><g class="ic" transform="translate(0.3 12)"><path d="M1.900 -7H-0.300V7H1.900"/><path d="M3.700 -2H11.500M3.700 -0.700H13.300M3.700 0.700H12.500M3.700 2H11" stroke-width="1.100" stroke="#444"/></g></svg>
<svg style="left:38px;top:488px" width="20" height="25" viewBox="0 0 20 25"><g class="ic" transform="translate(0.2 12.7)"><rect x="2.400" y="-8" width="13.800" height="16" fill="#fff"/><path d="M2.400 -5.400H16.200M7 -8V8M11.600 -8V8"/></g></svg>
<svg style="left:65px;top:488px" width="20" height="25" viewBox="0 0 20 25"><g class="ic" transform="translate(0.8 12.7)"><rect x="0.600" y="-7" width="17.300" height="14" fill="#fff"/><path d="M0.600 -2.300H17.900M0.600 2.300H17.900M4.400 -7V7"/></g></svg>
<!-- containers -->
<svg style="left:38px;top:558px" width="20" height="25" viewBox="0 0 20 25"><g class="ic" transform="translate(0.2 12.5)"><rect x="6.800" y="-8.800" width="5.300" height="17.300" fill="#fff"/><path d="M6.800 -5.200H12.100"/></g></svg>
<svg style="left:65px;top:558px" width="20" height="25" viewBox="0 0 20 25"><g class="ic" transform="translate(0.8 12.5)"><rect x="0.600" y="-2.800" width="17.300" height="5.700" fill="#fff"/><path d="M4.400 -2.800V2.900"/></g></svg>
<svg style="left:93px;top:558px" width="20" height="25" viewBox="0 0 20 25"><g class="ic" transform="translate(0.3 12.5)"><rect x="0.600" y="-6.400" width="17.300" height="13" fill="#fff"/></g></svg>
<svg style="left:120px;top:558px" width="20" height="25" viewBox="0 0 20 25"><g class="ic" transform="translate(0.8 12.5)"><path d="M0.800 0.100L9.250 -6.300L17.700 0.100L9.250 6.500Z" fill="#fff"/></g></svg>
<svg style="left:148px;top:558px" width="20" height="25" viewBox="0 0 20 25"><g class="ic" transform="translate(0.3 12.5)"><rect x="0.600" y="-6.400" width="17.300" height="13" rx="3.600" fill="#fff"/></g></svg>
<svg style="left:38px;top:583px" width="20" height="25" viewBox="0 0 20 25"><g class="ic" transform="translate(0.2 12.5)"><ellipse cx="9.250" cy="0.100" rx="8.650" ry="6.500" fill="#fff"/></g></svg>
<svg style="left:65px;top:583px" width="20" height="25" viewBox="0 0 20 25"><g class="ic" transform="translate(0.8 12.5)"><rect x="0.600" y="-6.400" width="17.300" height="13" rx="5.400" fill="#fff"/></g></svg>
<svg style="left:93px;top:583px" width="20" height="25" viewBox="0 0 20 25"><g class="ic" transform="translate(0.3 12.5)"><path d="M2 -8.800C2.600 -5 2.300 -2 1.900 0C2.300 2 2.600 5 2 8.800M16.500 -8.800C15.900 -5 16.200 -2 16.600 0C16.200 2 15.900 5 16.500 8.800"/></g></svg>
<svg style="left:120px;top:583px" width="20" height="25" viewBox="0 0 20 25"><g class="ic" transform="translate(0.8 12.5)"><path d="M2.600 -8.700C1.300 -8.500 0.900 -7.400 0.900 -6V6C0.900 7.400 1.300 8.500 2.600 8.700M15.900 -8.700C17.200 -8.500 17.600 -7.400 17.600 -6V6C17.600 7.400 17.200 8.500 15.900 8.700"/></g></svg>
<svg style="left:148px;top:583px" width="20" height="25" viewBox="0 0 20 25"><g class="ic" transform="translate(0.3 12.5)"><path d="M0.600 -6.800C4 -7.600 7 -7.300 9.250 -7C11.500 -7.300 14.500 -7.600 17.900 -6.800M0.600 6.900C4 7.700 7 7.400 9.250 7.100C11.500 7.400 14.500 7.700 17.900 6.900"/></g></svg>
<svg style="left:38px;top:608px" width="20" height="25" viewBox="0 0 20 25"><g class="ic" transform="translate(0.2 12.4)"><path d="M0.600 -6.400C0.900 -7.600 1.900 -7.900 3.300 -7.900H15.200C16.600 -7.900 17.600 -7.600 17.900 -6.400M0.600 6.600C0.900 7.800 1.900 8.100 3.300 8.100H15.200C16.600 8.100 17.600 7.800 17.900 6.600"/></g></svg>
<!-- basic shapes -->
<svg style="left:38px;top:678px" width="20" height="25" viewBox="0 0 20 25"><g class="ic" transform="translate(0.2 12)"><rect x="0.600" y="-6.400" width="17.300" height="12.800" fill="#fff"/></g></svg>
<svg style="left:65px;top:678px" width="20" height="25" viewBox="0 0 20 25"><g class="ic" transform="translate(0.8 12)"><path d="M9.250 -6.300L17.600 6.400H0.900Z" fill="#fff"/></g></svg>
<svg style="left:93px;top:678px" width="20" height="25" viewBox="0 0 20 25"><g class="ic" transform="translate(0.3 12)"><path d="M0.600 -6.300L17.900 6.400H0.600Z" fill="#fff"/></g></svg>
<svg style="left:120px;top:678px" width="20" height="25" viewBox="0 0 20 25"><g class="ic" transform="translate(0.8 12)"><path d="M9.250 -8.200L17.800 -2L14.500 8H4L0.700 -2Z" fill="#fff"/></g></svg>
<svg style="left:148px;top:678px" width="20" height="25" viewBox="0 0 20 25"><g class="ic" transform="translate(0.3 12)"><path d="M0.700 0L5 -7.500H13.500L17.800 0L13.500 7.500H5Z" fill="#fff"/></g></svg>
<svg style="left:38px;top:702px" width="20" height="25" viewBox="0 0 20 25"><g class="ic" transform="translate(0.2 12.75)"><path d="M5.600 -8.500H12.900L17.900 -3.500V3.500L12.900 8.500H5.600L0.600 3.500V-3.500Z" fill="#fff"/></g></svg>
<svg style="left:65px;top:702px" width="20" height="25" viewBox="0 0 20 25"><g class="ic" transform="translate(0.8 12.75)"><path d="M5 -8.400H13.500V-4.200H17.900V4.200H13.500V8.400H5V4.200H0.600V-4.200H5Z" fill="#fff"/></g></svg>
<svg style="left:93px;top:702px" width="20" height="25" viewBox="0 0 20 25"><g class="ic" transform="translate(0.3 12.75)"><path transform="translate(9.250 0) scale(1.140 1.100) translate(-9.250 0)" d="M4.600 -3.600C4.200 -5.600 6.800 -6.600 8.200 -5.400C9.400 -6.800 12.400 -6.400 12.800 -4.800C14.800 -5.600 16.800 -3.800 15.900 -2C17.600 -1.200 17.400 1.600 15.700 2.200C16.500 4.200 14 5.500 12.600 4.600C11.800 6.400 9 6.400 8 5C6.600 6.200 3.900 5.400 4.200 3.600C2.200 3.600 1.400 1.200 2.600 0C1.300 -1.400 2.600 -3.800 4.600 -3.600Z" fill="#fff"/></g></svg>
<svg style="left:120px;top:702px" width="20" height="25" viewBox="0 0 20 25"><g class="ic" transform="translate(0.8 12.75)"><path d="M0.700 -2.400H12.200V-5.300L17.800 0L12.200 5.300V2.400H0.700Z" fill="#fff"/></g></svg>
<svg style="left:148px;top:702px" width="20" height="25" viewBox="0 0 20 25"><g class="ic" transform="translate(0.3 12.75)"><path d="M6.600 -8.700H11.600V3.200H14.600L9.100 8.800L3.600 3.200H6.600Z" fill="#fff"/></g></svg>
<svg style="left:38px;top:727px" width="20" height="25" viewBox="0 0 20 25"><g class="ic" transform="translate(0.2 12.7)"><path d="M17.800 -2.400H6.300V-5.300L0.700 0L6.300 5.300V2.400H17.800Z" fill="#fff"/></g></svg>
<svg style="left:65px;top:727px" width="20" height="25" viewBox="0 0 20 25"><g class="ic" transform="translate(0.8 12.7)"><path d="M6.700 8.700H11.700V-3.200H14.700L9.200 -8.800L3.700 -3.200H6.700Z" fill="#fff"/></g></svg>
<svg style="left:93px;top:727px" width="20" height="25" viewBox="0 0 20 25"><g class="ic" transform="translate(0.3 12.7)"><path d="M0.700 0L5.600 -5.200V-2.300H12.900V-5.200L17.800 0L12.900 5.200V2.300H5.600V5.200Z" fill="#fff"/></g></svg>
<svg style="left:120px;top:727px" width="20" height="25" viewBox="0 0 20 25"><g class="ic" transform="translate(0.8 12.7)"><path d="M9.300 -8.800L14.500 -3.900H11.600V3.900H14.500L9.300 8.800L4.100 3.900H7V-3.900H4.100Z" fill="#fff"/></g></svg>
<svg style="left:148px;top:727px" width="20" height="25" viewBox="0 0 20 25"><g class="ic" transform="translate(0.3 12.7)"><circle cx="9" cy="0" r="8.500" fill="#fff"/></g></svg>
<svg style="left:38px;top:752px" width="20" height="25" viewBox="0 0 20 25"><g class="ic" transform="translate(0.2 12.4)"><path d="M9.250 -8.800L11.400 -2.300H18L12.600 1.600L14.700 8.200L9.250 4.200L3.800 8.200L5.900 1.600L0.500 -2.300H7.100Z" fill="#fff"/></g></svg>
<svg style="left:65px;top:752px" width="20" height="25" viewBox="0 0 20 25"><g class="ic" transform="translate(0.8 12.4)"><path d="M0.700 0L9.250 -8.600L17.800 0L9.250 8.600Z" fill="#fff"/></g></svg>
<svg style="left:93px;top:752px" width="20" height="25" viewBox="0 0 20 25"><g class="ic" transform="translate(0.3 12.4)"><path d="M9.250 -7.600L17 -2.200L14.100 7.200H4.400L1.500 -2.200Z" fill="#fff"/><g fill="#fff" stroke-width="0.8"><circle cx="9.250" cy="-7.600" r="1.600"/><circle cx="17" cy="-2.200" r="1.600"/><circle cx="14.100" cy="7.200" r="1.600"/><circle cx="4.400" cy="7.200" r="1.600"/><circle cx="1.500" cy="-2.200" r="1.600"/></g></g></svg>
<svg style="left:120px;top:752px" width="20" height="25" viewBox="0 0 20 25"><g class="ic" transform="translate(0.8 12.4)"><path d="M1.100 0.300H17.900"/></g></svg>
<svg style="left:148px;top:752px" width="20" height="25" viewBox="0 0 20 25"><g class="ic" transform="translate(0.3 12.4)"><path d="M8.800 -7.800V9.100"/></g></svg>
<!-- top bar icons -->
<svg style="left:14px;top:17px;" width="18" height="19" viewBox="0 0 18 19">
<path d="M7.600 1.400L15.300 4.900Q15.900 5.200 15.900 6V12.400Q15.900 13.700 14.200 13.700T12.400 12.400V7.600L6.800 4.800Q5.900 4.300 6.100 3.100Q6.500 1.100 7.600 1.400Z" fill="#e8712c"/>
<path d="M7.700 1.300L15.400 5L14 5.900Q13.200 6.500 12.400 6.100L6.600 3.300Q6.800 1.200 7.700 1.300Z" fill="#f9a851"/>
<path d="M1.100 5.800Q1.100 4.400 2.900 4.400T4.700 5.800V10.600L10.100 13.600Q10.800 14.100 10.600 15.400Q10.200 17.100 9.300 17.200L1.700 12.900Q1.100 12.600 1.100 11.800Z" fill="#e8712c"/>
<path d="M1.200 5.700Q1.300 4.300 2.900 4.300T4.600 5.700Q4.500 6.600 2.900 6.600T1.200 5.700Z" fill="#f9a851"/>
<path d="M4.700 10.700L10.100 13.700Q10.700 14.200 10.400 15.300L3.600 11.700Z" fill="#f6953f"/>
</svg>
<svg style="left:155px;top:8px;" width="17" height="16" viewBox="0 0 17 16"><path d="M8.500 1.100L10.700 5.700L15.700 6.400L12.100 9.900L12.900 14.900L8.500 12.500L4.100 14.900L4.900 9.900L1.300 6.400L6.300 5.700Z" class="tb" stroke-width="1.050"/></svg>
<svg style="left:391px;top:27px;" width="17" height="17" viewBox="0 0 17 17"><g class="tb" stroke-width="0.900" stroke="#444950">
<path d="M3.200 4V2.400Q3.200 1.500 4.100 1.500H6Q6.900 1.500 6.900 2.400V4M3.200 4H6.900L7.800 9.300V14.300Q7.800 15.300 6.800 15.300H2.400Q1.400 15.300 1.400 14.300V9.300ZM1.400 9.300H7.800"/>
<path d="M13.600 4V2.400Q13.600 1.500 12.700 1.500H10.800Q9.900 1.500 9.900 2.400V4M13.600 4H9.900L9 9.300V14.300Q9 15.300 10 15.300H14.400Q15.400 15.300 15.400 14.300V9.300ZM15.400 9.300H9"/>
<path d="M7.200 5.500H9.600M7.800 9.300H9"/></g></svg>
<svg style="left:429px;top:27px;" width="18" height="18" viewBox="0 0 18 18"><g class="tb" stroke-width="0.950" stroke="#3c4149"><circle cx="8.800" cy="8.400" r="6.900"/><path d="M8.800 4.400V8.700L11 10.300"/></g></svg>
<svg style="left:918px;top:18px;" width="17" height="16" viewBox="0 0 17 16"><g class="tb" stroke-width="1.100"><path d="M2.600 1.600H13.600Q15.100 1.600 15.100 3.100V10.400Q15.100 11.900 13.600 11.900H9.600L8 13.900L6.500 11.900H2.600Q1.100 11.900 1.100 10.400V3.100Q1.100 1.600 2.600 1.600Z"/></g>
<path d="M5.700 4.800H7.600V6.600Q7.600 8 6 8.300V7.400Q6.700 7.200 6.700 6.700H5.700ZM8.700 4.800H10.600V6.600Q10.600 8 9 8.300V7.400Q9.700 7.200 9.700 6.700H8.700Z" fill="#282c33"/></svg>
<svg style="left:959px;top:18px;" width="18" height="16" viewBox="0 0 18 16"><rect x="1.600" y="1.700" width="14.800" height="12" rx="1.500" class="tb" stroke-width="1.100"/><path d="M7.200 5.400V10.200L11 7.800Z" fill="#282c33"/></svg>
<svg style="left:1002px;top:19px;" width="17" height="14" viewBox="0 0 17 14"><g class="tb" stroke-width="1.100"><rect x="1.200" y="2.200" width="10" height="9.200" rx="1.500"/><path d="M11.200 5.600L15.400 3.300V10.300L11.200 8Z"/></g></svg>
<svg style="left:1053px;top:17px;" width="19" height="17" viewBox="0 0 19 17"><g transform="translate(0.6 0.3)"><g fill="none" stroke="#fff" stroke-width="1.050" stroke-linejoin="round">
<circle cx="11.500" cy="4.300" r="2.500"/><path d="M13.500 7.600Q17 8 17.300 11.800H14"/>
<circle cx="6.700" cy="5.500" r="3"/><path d="M1.300 14.800Q1.300 9.800 6.700 9.800T12.100 14.800Z"/></g></g></svg>
<!-- toolbar icons -->
<svg style="left:8px;top:60px;" width="17" height="16" viewBox="0 0 17 16"><g class="tb" stroke-width="1.020" stroke="#454a52"><path d="M5.800 3.400L1.300 7.100L5.800 10.800M1.500 7.100H11Q15.200 7.300 15.300 12.600"/></g></svg>
<svg style="left:35px;top:60px;" width="17" height="16" viewBox="0 0 17 16"><g class="tbd" stroke-width="1.058"><path d="M11.200 3.400L15.700 7.100L11.200 10.800M15.500 7.100H6Q1.800 7.300 1.700 12.600"/></g></svg>
<svg style="left:66px;top:60px;" width="17" height="17" viewBox="0 0 17 17"><g class="tbd" stroke-width="1.058"><rect x="1.600" y="1.600" width="11.300" height="4.600" rx="1.600"/><path d="M12.900 3.700H14Q15.400 3.700 15.400 5.200V6.600Q15.400 8.100 14 8.100H9.500Q8.400 8.100 8.400 9.200V9.700"/><rect x="7.300" y="9.700" width="2.300" height="5.800" rx="1.100"/></g></svg>
<svg style="left:189px;top:66px;" width="6.8" height="4.8" viewBox="0 0 6.8 4.8"><g transform="translate(0.7 0.2)"><path d="M0 0H6.8 L3.4 4.8 Z" fill="#17191d"/></g></svg>
<svg style="left:314px;top:66px;" width="6.8" height="4.8" viewBox="0 0 6.8 4.8"><g transform="translate(0 0.2)"><path d="M0 0H6.8 L3.4 4.8 Z" fill="#17191d"/></g></svg>
<svg style="left:335px;top:64px;" width="10" height="10" viewBox="0 0 10 10"><path d="M1.800 4.900H7" stroke="#282c33" stroke-width="1.196" fill="none"/></svg>
<svg style="left:383px;top:64px;" width="10" height="10" viewBox="0 0 10 10"><path d="M1.300 4.800H7.300M4.300 1.800V7.800" stroke="#282c33" stroke-width="1.196" fill="none"/></svg>
<div class="t" style="left:405.59px;top:62px;font-size:15.1px;line-height:1;font-family:'Liberation Sans',sans-serif;color:#282c33;transform:scaleX(0.9228);transform-origin:0 0;font-weight:bold">B</div>
<div class="t" style="left:433.62px;top:63px;font-size:15.9px;line-height:1;font-family:'Liberation Mono',monospace;color:#33383f;transform:scaleX(0.9493);transform-origin:0 0;font-style:italic">I</div>
<div class="t" style="left:460.62px;top:62px;font-size:12.9px;line-height:1;font-family:'Liberation Sans',sans-serif;color:#33383f;transform:scaleX(1.1152);transform-origin:0 0">U</div>
<div class="abs" style="left:461.6px;top:73.8px;width:8.4px;height:1px;background:#33383f;"></div>
<div class="t" style="left:488.00px;top:62px;font-size:15.8px;line-height:1;font-family:'Liberation Sans',sans-serif;color:#33383f;transform:scaleX(0.9613);transform-origin:0 0">A</div>
<div class="abs" style="left:486px;top:78.3px;width:14.2px;height:2.6px;background:#282c33;border-radius:.5px"></div>
<svg style="left:513px;top:62px;" width="15" height="13" viewBox="0 0 15 13"><path d="M1.300 1.700H13.700M3.300 4.800H11.700M1.300 7.700H13.700" class="tb" stroke-width="1.000"/><path d="M3.300 10.600H11.700" class="tb" stroke="#8b9099" stroke-width="1.000"/></svg>
<div class="t" style="left:539.86px;top:62px;font-size:15.2px;line-height:1;font-family:'Liberation Sans',sans-serif;color:#33383f;transform:scaleX(1.1311);transform-origin:0 0">T</div>
<svg style="left:550px;top:67px;" width="5" height="3" viewBox="0 0 5 3"><g transform="translate(0.8 0)"><path d="M0.200 0.200H4.200L2.200 2.500Z" fill="#282c33"/></g></svg>
<svg style="left:570px;top:59px;" width="19" height="19" viewBox="0 0 19 19"><g class="tb" stroke-width="0.920"><rect x="3.300" y="3.200" width="12.200" height="12.200" rx="1.700"/><path d="M9.400 1.300V5.200M9.400 13.400V17.300M1.300 9.300H5.200M13.600 9.300H17.500M9.400 7.700V10.900M7.800 9.300H11"/></g></svg>
<svg style="left:598px;top:59px;" width="18" height="23" viewBox="0 0 18 23"><g transform="translate(0 0.7)"><path d="M7 2.200L14 9.200L8.600 14.600Q7.600 15.600 6.600 14.600L1.700 9.700Q0.700 8.700 1.700 7.700Z" class="tb" stroke-width="1.012"/>
<path d="M5.600 2.200L7.600 4.200" class="tb" stroke-width="1.012"/>
<path d="M1.400 8.600H13.900L8.600 14.600Q7.600 15.600 6.600 14.600L1.700 9.700Q1.100 9.100 1.400 8.600Z" fill="#282c33"/>
<path d="M14.500 11Q16.100 13.200 16.100 14.200A1.600 1.600 0 0 1 12.900 14.200Q12.900 13.200 14.500 11Z" fill="#282c33"/>
<rect x="1.200" y="18.600" width="14.600" height="2.500" fill="#fff"/></g></svg>
<svg style="left:626px;top:59px;" width="17" height="23" viewBox="0 0 17 23"><g transform="translate(0 0.6)"><g class="tb" stroke-width="1.012"><path d="M2 14.200L3.200 10.700L11.700 2.200Q12.700 1.300 13.700 2.200L14.400 2.900Q15.300 3.900 14.400 4.900L5.900 13.400Z"/><path d="M10.600 3.400L13.200 6M1.400 16.400H15"/></g>
<rect x="1" y="18.700" width="14.400" height="2.600" fill="#282c33"/></g></svg>
<svg style="left:654px;top:59px;" width="15" height="19" viewBox="0 0 15 19"><g transform="translate(0.3 0.5)"><path d="M3 1.600H9.600L12.800 4.800V15.200Q12.800 16.700 11.300 16.700H3Q1.500 16.700 1.500 15.200V3.100Q1.500 1.600 3 1.600Z" class="tb" stroke-width="1.012"/>
<path d="M7.200 5.300Q10 9 10 10.700A2.800 2.800 0 0 1 4.400 10.700Q4.400 9 7.200 5.300Z" fill="#282c33"/></g></svg>
<svg style="left:680px;top:59px;" width="19" height="19" viewBox="0 0 19 19"><g transform="translate(0 0.4)"><g class="tb" stroke-width="0.966"><path d="M7.600 4.600H3Q1.500 4.600 1.500 6.100V15Q1.500 16.500 3 16.500H14.600Q16.100 16.500 16.100 15V11.200"/><path d="M4.400 8.600H7.600M4.400 11.300H13.200M4.400 13.700H13.200"/>
<circle cx="13" cy="5.500" r="4.200" fill="#fafbfd"/><path d="M11.100 5.500L12.600 7L15 4.200"/></g></g></svg>
<svg style="left:706px;top:59px;" width="20" height="19" viewBox="0 0 20 19"><path d="M8.200 8.200Q9.300 7.100 10.400 8.200L17.700 15.500Q18.300 16.600 17.500 17.400T15.700 17.600L8.300 10.300Q7.200 9.200 8.200 8.200ZM10.400 10.400L11.900 8.900" class="tb" stroke-width="0.966"/>
<path d="M4.500 1.600Q5 4.700 8.100 5.200Q5 5.700 4.500 8.800Q4 5.700 0.900 5.200Q4 4.700 4.500 1.600ZM12.500 0.800Q12.800 2.900 14.900 3.200Q12.800 3.500 12.500 5.600Q12.200 3.500 10.100 3.200Q12.200 2.900 12.500 0.800ZM4.700 11.300Q5 13.300 7 13.600Q5 13.900 4.700 15.900Q4.400 13.900 2.400 13.600Q4.400 13.300 4.700 11.300Z" fill="#b5b9c1"/></svg>
<div class="abs" style="left:740px;top:67.8px;width:26px;height:1.3px;background:#555;"></div>
<svg style="left:769px;top:66px;" width="6.8" height="4.8" viewBox="0 0 6.8 4.8"><g transform="translate(0.3 0.2)"><path d="M0 0H6.8 L3.4 4.8 Z" fill="#17191d"/></g></svg>
<svg style="left:821px;top:62px;" width="8" height="13" viewBox="0 0 8 13"><path d="M1.500 5.200H6.700L4.100 1.200ZM1.500 7.800H6.700L4.100 11.800Z" fill="#17191d"/></svg>
<svg style="left:842px;top:59px;" width="17" height="19" viewBox="0 0 17 19"><path d="M1.400 16.300H6.600V4.500H11" class="tb" stroke-width="1.058" stroke-linecap="butt"/><path d="M10.300 1.600L15 4.500L10.300 7.400Z" fill="#282c33"/></svg>
<svg style="left:909px;top:66px;" width="6.8" height="4.8" viewBox="0 0 6.8 4.8"><g transform="translate(0.4 0.2)"><path d="M0 0H6.8 L3.4 4.8 Z" fill="#17191d"/></g></svg>
<svg style="left:967px;top:66px;" width="6.8" height="4.8" viewBox="0 0 6.8 4.8"><g transform="translate(0.3 0.2)"><path d="M0 0H6.8 L3.4 4.8 Z" fill="#17191d"/></g></svg>
<svg style="left:931px;top:62px;" width="23" height="13" viewBox="0 0 23 13"><path d="M2 6.400H12" stroke="#17191d" stroke-width="1.288" fill="none"/><path d="M9.700 2.500L21.200 6.400L9.700 10.300Z" fill="#17191d"/></svg>
<svg style="left:988px;top:61px;" width="17" height="15" viewBox="0 0 17 15"><g class="tbd" stroke-width="1.012"><path d="M4.300 4.200H15.200M12.500 1.500L15.200 4.200L12.500 6.900M12.700 10.500H1.800M4.500 7.800L1.800 10.500L4.500 13.200"/></g></svg>
<svg style="left:1021px;top:60px;" width="14" height="17" viewBox="0 0 14 17"><path d="M8 1.200L2.300 9.300H6.800L5.200 15.700L11.600 6.800H7.100L9.600 1.200Z" class="tbd" stroke-width="0.966"/></svg>
<svg style="left:1048px;top:61px;" width="15" height="15" viewBox="0 0 15 15"><g class="tbd" stroke-width="0.966"><path d="M1.800 13.500V6.600A5.400 5.400 0 0 1 12.600 6.600V13.500H9.600V6.800A2.400 2.400 0 0 0 4.800 6.800V13.500Z"/><path d="M1.800 11.200H4.800M9.600 11.200H12.600"/></g></svg>
<div class="abs" style="left:1105.8px;top:63.2px;width:3.1px;height:3.1px;background:#17191d;border-radius:50%"></div>
<div class="abs" style="left:1110.5px;top:63.2px;width:3.1px;height:3.1px;background:#17191d;border-radius:50%"></div>
<div class="abs" style="left:1115.2px;top:63.2px;width:3.1px;height:3.1px;background:#17191d;border-radius:50%"></div>
<svg style="left:1135px;top:59px;" width="18" height="19" viewBox="0 0 18 19"><rect x="1.900" y="2.500" width="13.900" height="14" rx="1.500" class="tb" stroke-width="1.058"/><path d="M1.900 5.400H15.800" class="tb" stroke-width="1.058"/><path d="M10.600 5.900H15.300V16H10.600Z" fill="#9aa0a9"/><path d="M10.300 5.400V16.500" class="tb" stroke-width="0.920"/></svg>
<!-- bottom icons -->
<svg style="left:946px;top:849px;" width="18" height="18" viewBox="0 0 18 18"><g class="tb" stroke-width="1"><path d="M8.600 1.700L15.100 5L8.600 8.300L2.100 5Z"/><path d="M2.100 8.200L8.600 11.500L15.100 8.200M2.100 11.400L8.600 14.700L15.100 11.400"/></g></svg>
<svg style="left:979px;top:849px;" width="18" height="18" viewBox="0 0 18 18"><g class="tb" stroke-width="1"><circle cx="8.600" cy="8.500" r="7"/><path d="M5.500 12.300L8.600 4.300L11.700 12.300L8.600 10.600Z"/></g></svg>
<svg style="left:1014px;top:852px;" width="14" height="12" viewBox="0 0 14 12"><path d="M1.500 5.500H11.500" class="tb" stroke-width="1.150"/></svg>
<svg style="left:1082px;top:855px;" width="5.6" height="4.6" viewBox="0 0 5.6 4.6"><g transform="translate(0.3 0.3)"><path d="M0 0H5.6 L2.8 4.6 Z" fill="#17191d"/></g></svg>
<svg style="left:1104px;top:851px;" width="14" height="14" viewBox="0 0 14 14"><path d="M1.600 6.500H11.900M6.750 1.300V11.700" class="tb" stroke-width="1.150"/></svg>
<svg style="left:1136px;top:850px;" width="16" height="16" viewBox="0 0 16 16"><g stroke="#33383f" stroke-width="1.050" fill="none"><path d="M2.300 2.300L6.100 6.100M13.100 2.300L9.300 6.100M13.100 13.100L9.300 9.300M2.300 13.100L6.100 9.300"/></g><path d="M0.400 0.400H4.300L0.400 4.300ZM15 0.400V4.300L11.100 0.400ZM15 15H11.100L15 11.100ZM0.400 15V11.100L4.300 15Z" fill="#282c33"/></svg>
<svg style="left:1150px;top:843px;" width="10" height="12" viewBox="0 0 10 12"><path d="M2.500 0.800H10V10Q9.500 2 2.500 2Z" fill="#fff"/></svg>
<svg style="left:0px;top:863px;" width="7" height="7" viewBox="0 0 7 7"><path d="M0 0V7H7A7 7 0 0 1 0 0Z" fill="#fff"/></svg>
</div>
</body>
</html>
